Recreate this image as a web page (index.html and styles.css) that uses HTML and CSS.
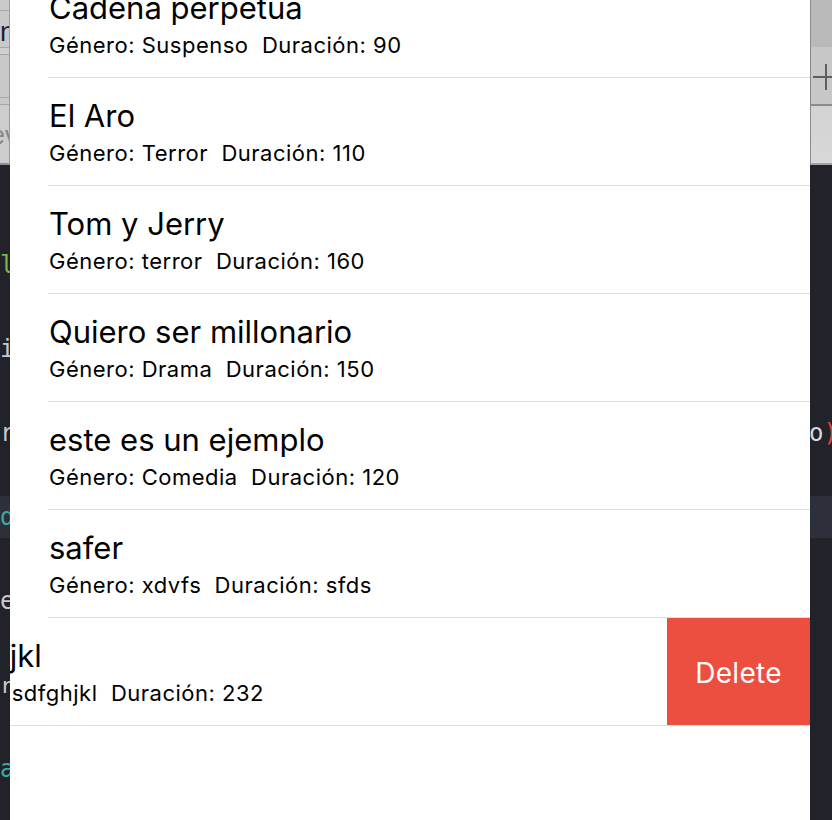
FILE: index.html
```html
<!DOCTYPE html>
<html lang="es">
<head>
<meta charset="utf-8">
<title>Películas</title>
<link rel="stylesheet" href="styles.css">
</head>
<body>
<div class="screen">
  <aside class="edge edge-left">
    <div class="tb">
      <div class="tb-a"></div>
      <div class="tb-b"><span class="tb-n">n</span></div>
      <div class="tb-c"></div>
      <div class="tb-d"></div>
      <div class="tb-e"></div>
      <div class="tb-f"><span class="tb-ev">ev</span></div>
    </div>
    <div class="code code-left">
      <div class="ln"></div>
      <div class="ln"><span class="k-green l-l">l</span></div>
      <div class="ln"></div>
      <div class="ln"><span class="k-plain l-i">i</span></div>
      <div class="ln"></div>
      <div class="ln"><span class="k-plain l-r">r</span></div>
      <div class="ln"></div>
      <div class="ln ln-hl"><span class="k-teal l-d">d</span></div>
      <div class="ln"></div>
      <div class="ln"><span class="k-plain l-e">e</span></div>
      <div class="ln"></div>
      <div class="ln"><span class="k-plain l-r2">r</span></div>
      <div class="ln"></div>
      <div class="ln"><span class="k-teal l-a">a</span></div>
    </div>
  </aside>

  <main class="panel">
    <ul class="list">
      <li class="cell">
        <div class="cell-body">
          <div class="title">Cadena perpetua</div>
          <div class="sub">Género: Suspenso&nbsp; Duración: 90</div>
        </div>
      </li>
      <li class="cell">
        <div class="cell-body">
          <div class="title">El Aro</div>
          <div class="sub">Género: Terror&nbsp; Duración: 110</div>
        </div>
      </li>
      <li class="cell">
        <div class="cell-body">
          <div class="title">Tom y Jerry</div>
          <div class="sub">Género: terror&nbsp; Duración: 160</div>
        </div>
      </li>
      <li class="cell">
        <div class="cell-body">
          <div class="title">Quiero ser millonario</div>
          <div class="sub">Género: Drama&nbsp; Duración: 150</div>
        </div>
      </li>
      <li class="cell">
        <div class="cell-body">
          <div class="title">este es un ejemplo</div>
          <div class="sub">Género: Comedia&nbsp; Duración: 120</div>
        </div>
      </li>
      <li class="cell">
        <div class="cell-body">
          <div class="title">safer</div>
          <div class="sub">Género: xdvfs&nbsp; Duración: sfds</div>
        </div>
      </li>
      <li class="cell cell-swiped">
        <div class="cell-body">
          <div class="title">asdfghjkl</div>
          <div class="sub">Género: sdfghjkl&nbsp; Duración: 232</div>
        </div>
        <button class="delete" type="button">Delete</button>
      </li>
    </ul>
  </main>

  <aside class="edge edge-right">
    <div class="tbr">
      <div class="tbr-a"></div>
      <div class="tbr-b">
        <svg class="plus" width="26" height="26" viewBox="0 0 26 26" aria-hidden="true">
          <path d="M13 0V26M0 13H26" stroke="#5e5e5e" stroke-width="2" fill="none"/>
        </svg>
      </div>
      <div class="tbr-c"></div>
    </div>
    <div class="code code-right">
      <div class="ln"></div>
      <div class="ln"></div>
      <div class="ln"></div>
      <div class="ln"></div>
      <div class="ln"></div>
      <div class="ln"><span class="k-light r-o">o</span><span class="k-red">)</span></div>
      <div class="ln"></div>
      <div class="ln ln-hl"></div>
      <div class="ln"></div>
      <div class="ln"></div>
      <div class="ln"></div>
      <div class="ln"></div>
      <div class="ln"></div>
      <div class="ln"></div>
    </div>
  </aside>
</div>
</body>
</html>
```

FILE: styles.css
```css
* { box-sizing: border-box; }

html, body {
  margin: 0;
  padding: 0;
  height: 100%;
}

body {
  background: #21222a;
  overflow: hidden;
}

.screen {
  display: grid;
  grid-template-columns: 10px 800px 22px;
  height: 820px;
}

/* ---------- side edges (window behind) ---------- */
.edge {
  overflow: hidden;
  display: flex;
  flex-direction: column;
  background: #21222a;
}
.edge > * { flex-shrink: 0; }

.tb {
  height: 165px;
  display: flex;
  flex-direction: column;
  background: #c9c9c9;
  border-right: 1px solid #9c9c9c;
  border-bottom: 2px solid #8d8d8d;
}
.tb > * { flex-shrink: 0; }
.tb-a { height: 11px; background: #cacaca; border-bottom: 1px solid #a9a9a9; }
.tb-b {
  height: 37px;
  padding-top: 6px;
  border-bottom: 1px solid #a6a6a6;
  font: 27px/30px "Liberation Sans", Arial, sans-serif;
  color: #1b2332;
  white-space: nowrap;
  text-align: right;
  overflow: hidden;
}
.tb-n { display: inline-block; }
.tb-c { height: 7px; background: #d0d0d0; border-bottom: 1px solid #a6a6a6; }
.tb-d { height: 43px; border-bottom: 1px solid #a6a6a6; }
.tb-e { height: 7px; border-bottom: 1px solid #a6a6a6; }
.tb-f {
  flex: 1;
  background: #cdcdcd;
  font: 25px/36px "Liberation Sans", Arial, sans-serif;
  color: #858585;
  white-space: nowrap;
  padding-top: 12px;
  overflow: hidden;
}
.tb-ev { display: inline-block; margin-left: -9px; }

.tbr {
  height: 165px;
  display: flex;
  flex-direction: column;
  border-left: 1px solid #8a8a8a;
  border-bottom: 2px solid #a3a3a3;
}
.tbr > * { flex-shrink: 0; }
.tbr-a { height: 47px; background: #b9b9b9; }
.tbr-b {
  height: 59px;
  background: #c7c7c7;
  border-bottom: 2px solid #8b8b8b;
  padding: 17px 0 0 2px;
}
.plus { display: block; }
.tbr-c { flex: 1; background: linear-gradient(#d3d3d3, #d8d8d8); }

.code {
  padding-top: 37px;
  font: 24px/42px "DejaVu Sans Mono", "Liberation Mono", monospace;
  white-space: nowrap;
}
.ln { height: 42px; }
.ln-hl { background: #2d2f3b; }

.code-left .ln { text-align: right; }
.code-left .ln span { display: inline-block; }
.l-l { margin-right: 3px; }
.l-i { margin-right: 2px; }
.l-r { margin-right: 2px; }
.l-d { margin-right: 1px; }
.l-e { margin-right: 1px; }
.l-r2 { margin-right: 1px; font-size: 22px; }
.l-a { margin-right: 2px; }

.r-o { margin-left: -1px; }

.k-green { color: #79b548; }
.k-teal { color: #3aa99f; }
.k-plain { color: #c9c9cf; }
.k-light { color: #d9d9de; }
.k-red { color: #e0473e; }

/* ---------- list panel ---------- */
.panel {
  background: #ffffff;
  overflow: hidden;
  font-family: Inter, "Noto Sans", sans-serif;
  color: #000;
}

.list {
  list-style: none;
  margin: -30px 0 0;
  padding: 0;
}

.cell {
  height: 108px;
  display: flex;
}

.cell-body {
  flex: 1;
  margin-left: 38px;
  padding: 20px 0 0 1px;
  border-bottom: 1px solid #dedede;
  white-space: nowrap;
}

.title {
  font-size: 31px;
  line-height: 36px;
}

.sub {
  font-size: 22px;
  line-height: 26px;
  letter-spacing: 0.5px;
  margin-top: 6px;
}

.cell-swiped {
  border-bottom: 1px solid #dedede;
}
.cell-swiped .cell-body {
  flex: 0 0 749px;
  margin-left: -92px;
  border-bottom: 0;
}
.cell-swiped .title { margin-left: -10px; }

.delete {
  flex: 0 0 143px;
  border: 0;
  margin: 0;
  padding: 3px 0 0;
  background: #ec4e3f;
  color: #fff;
  font: 28px Inter, "Noto Sans", sans-serif;
  letter-spacing: 0.3px;
}
```
